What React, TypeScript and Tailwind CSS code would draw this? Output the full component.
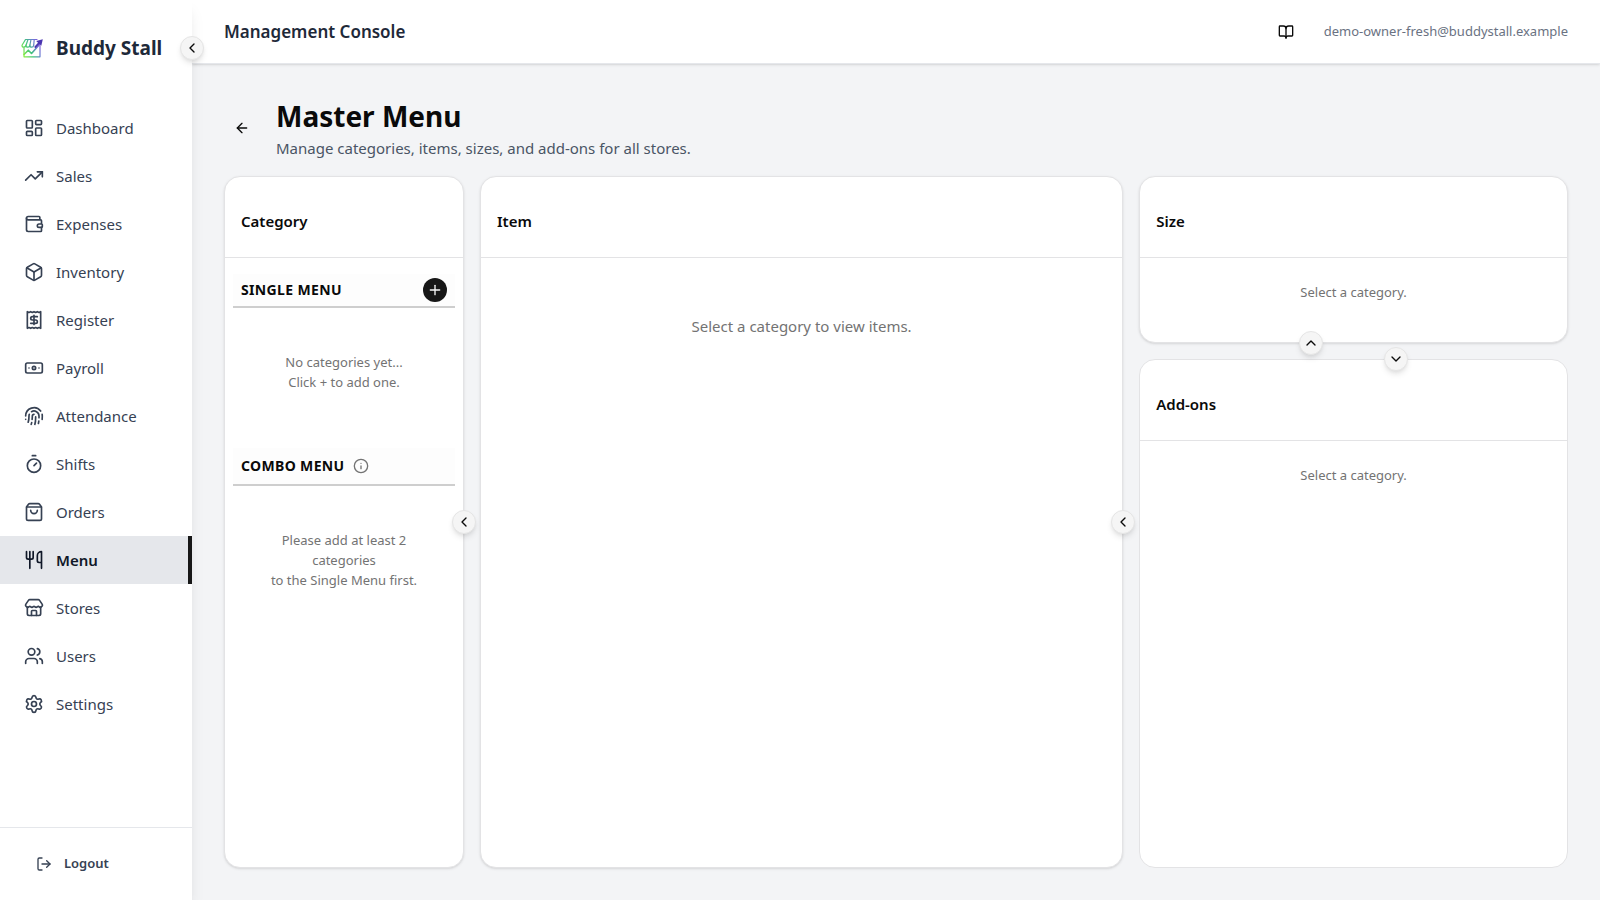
import {
  ArrowLeft,
  Banknote,
  BookOpen,
  Box,
  ChevronDown,
  ChevronLeft,
  ChevronUp,
  Fingerprint,
  Info,
  LayoutDashboard,
  LogOut,
  Plus,
  Settings,
  ShoppingBag,
  Store,
  Timer,
  TrendingUp,
  Users,
  Utensils,
  Wallet,
  type LucideIcon,
} from "lucide-react";
import type { ReactNode } from "react";

function ReceiptIcon({ className }: { className?: string }) {
  return (
    <svg
      viewBox="0 0 24 24"
      fill="none"
      stroke="currentColor"
      strokeWidth="2"
      strokeLinecap="round"
      strokeLinejoin="round"
      className={className}
      aria-hidden="true"
    >
      <path d="M4 2v20l2-1 2 1 2-1 2 1 2-1 2 1 2-1 2 1V2l-2 1-2-1-2 1-2-1-2 1-2-1-2 1Z" />
      <path d="M16 8h-6a2 2 0 1 0 0 4h4a2 2 0 1 1 0 4H8" />
      <path d="M12 17.5v-11" />
    </svg>
  );
}

type NavItem = { label: string; icon: LucideIcon | typeof ReceiptIcon; active?: boolean };

const NAV: NavItem[] = [
  { label: "Dashboard", icon: LayoutDashboard },
  { label: "Sales", icon: TrendingUp },
  { label: "Expenses", icon: Wallet },
  { label: "Inventory", icon: Box },
  { label: "Register", icon: ReceiptIcon },
  { label: "Payroll", icon: Banknote },
  { label: "Attendance", icon: Fingerprint },
  { label: "Shifts", icon: Timer },
  { label: "Orders", icon: ShoppingBag },
  { label: "Menu", icon: Utensils, active: true },
  { label: "Stores", icon: Store },
  { label: "Users", icon: Users },
  { label: "Settings", icon: Settings },
];

function Logo() {
  return (
    <svg viewBox="0 0 24 24" fill="none" className="size-6 shrink-0" aria-hidden="true">
      <defs>
        <linearGradient id="logo" x1="2" y1="18" x2="22" y2="8" gradientUnits="userSpaceOnUse">
          <stop offset="0" stopColor="#8cf03c" />
          <stop offset="0.4" stopColor="#3fc47c" />
          <stop offset="0.7" stopColor="#6a7fd0" />
          <stop offset="1" stopColor="#8a4fe0" />
        </linearGradient>
      </defs>
      <g stroke="url(#logo)" strokeWidth="1.2" strokeLinecap="round" strokeLinejoin="round">
        <path d="M17 3.5H5.500L2 9.200c0 1.300.8 2 1.800 2s2-.7 2.200-2c0 1.300.8 2 1.900 2s1.900-.7 2-2c0 1.300.8 2 1.800 2s1.900-.7 2-2" />
        <path d="M8 3.500 6 9.200M11 3.500 9.900 9.200M14.200 3.500l-.5 5.700M4 11.500v9.300h16V9.500" />
        <path d="M4 18.500l4.300-4.300 3.200 3.300 8-9" strokeWidth="1.600" />
      </g>
      <path d="M22.800 3.200 21.300 9.800 19.400 8 15.500 12.300 14.100 11 18 6.800 16.200 5Z" fill="#4a35b0" />
    </svg>
  );
}

const ROUND =
  "absolute z-20 flex size-6 items-center justify-center rounded-full border border-neutral-200 bg-neutral-100 text-neutral-950 shadow-md";

function Card({ title, className, children, toggle }: { title: string; className: string; children: ReactNode; toggle: ReactNode }) {
  return (
    <section className={`relative flex flex-col rounded-2xl border border-[#e3e3e5] bg-white ${className}`}>
      <h2 className="border-b border-[#e3e3e5] px-4 pt-8 pb-6 text-[15px] leading-6 font-semibold text-neutral-950">{title}</h2>
      {children}
      {toggle}
    </section>
  );
}

export default function App() {
  return (
    <div className="flex h-screen bg-gray-100 font-['Segoe_UI','Noto_Sans',sans-serif] text-neutral-950">
      <aside className="relative z-10 flex w-48 shrink-0 flex-col bg-white shadow-lg">
        <div className="flex h-24 items-center gap-3 pl-5">
          <Logo />
          <span className="text-[19px] leading-7 font-bold whitespace-nowrap text-gray-800">Buddy Stall</span>
        </div>
        <button type="button" aria-label="Collapse sidebar" className={`${ROUND} top-9 -right-3`}>
          <ChevronLeft className="size-4" />
        </button>
        <nav className="flex-1 pt-2">
          {NAV.map(({ label, icon: Icon, active }) => (
            <a
              key={label}
              href="#"
              aria-current={active ? "page" : undefined}
              className={`flex h-12 items-center gap-3 px-6 text-[15px] ${
                active ? "border-r-4 border-neutral-900 bg-gray-200 font-semibold text-gray-900" : "text-gray-700"
              }`}
            >
              <Icon className="size-5 shrink-0" />
              {label}
            </a>
          ))}
        </nav>
        <div className="border-t border-gray-200 p-4">
          <button type="button" className="flex h-10 w-full items-center gap-3 px-5 text-[13px] font-semibold text-gray-700">
            <LogOut className="size-4" />
            Logout
          </button>
        </div>
      </aside>

      <div className="flex min-w-0 flex-1 flex-col">
        <header className="flex h-16 shrink-0 items-center justify-between border-b border-gray-200 bg-white px-8 shadow-sm">
          <span className="text-[17px] leading-7 font-semibold text-gray-800">Management Console</span>
          <div className="flex items-center gap-5">
            <button type="button" aria-label="Guide" className="flex size-9 items-center justify-center">
              <BookOpen className="size-4" />
            </button>
            <span className="text-[13px] text-gray-500">demo-owner-fresh@buddystall.example</span>
          </div>
        </header>

        <main className="flex min-h-0 flex-1 flex-col gap-4 p-8">
          <div className="flex items-center gap-4">
            <button type="button" aria-label="Back" className="flex size-9 items-center justify-center">
              <ArrowLeft className="size-4" />
            </button>
            <div>
              <h1 className="text-[28px] leading-10 font-bold">Master Menu</h1>
              <p className="text-[15px] leading-6 text-gray-600">Manage categories, items, sizes, and add-ons for all stores.</p>
            </div>
          </div>

          <div className="grid min-h-0 flex-1 grid-cols-[240px_3fr_2fr] gap-4">
            <Card
              title="Category"
              className="shadow-sm"
              toggle={
                <button type="button" aria-label="Collapse categories" className={`${ROUND} top-1/2 -right-[13px] -translate-y-1/2`}>
                  <ChevronLeft className="size-4" />
                </button>
              }
            >
              <div className="px-2 pt-4">
                <div className="flex items-center justify-between border-b-2 border-[#cecece] bg-[#fdfdfd] px-2 py-1">
                  <h3 className="text-sm font-bold tracking-wide">SINGLE MENU</h3>
                  <button
                    type="button"
                    aria-label="Add category"
                    className="flex size-6 items-center justify-center rounded-full bg-neutral-900 text-neutral-50"
                  >
                    <Plus className="size-4" />
                  </button>
                </div>
                <p className="px-6 pt-11 pb-14 text-center text-[13px] leading-5 text-neutral-500">
                  No categories yet...
                  <br />
                  Click + to add one.
                </p>
                <div className="flex items-center gap-2 border-b-2 border-[#cecece] bg-[#fdfdfd] p-2">
                  <h3 className="text-sm font-bold tracking-wide">COMBO MENU</h3>
                  <Info className="size-4 text-neutral-500" />
                </div>
                <p className="px-6 pt-11 text-center text-[13px] leading-5 text-neutral-500">
                  Please add at least 2 categories
                  <br />
                  to the Single Menu first.
                </p>
              </div>
            </Card>

            <Card
              title="Item"
              className="shadow-sm"
              toggle={
                <button type="button" aria-label="Collapse items" className={`${ROUND} top-1/2 -right-[13px] -translate-y-1/2`}>
                  <ChevronLeft className="size-4" />
                </button>
              }
            >
              <p className="pt-14 text-center text-[15px] leading-6 text-neutral-500">Select a category to view items.</p>
            </Card>

            <div className="flex min-h-0 flex-col gap-4">
              <Card
                title="Size"
                className="shadow-sm"
                toggle={
                  <button type="button" aria-label="Collapse sizes" className={`${ROUND} -bottom-[13px] left-[40%] -translate-x-1/2`}>
                    <ChevronUp className="size-4" />
                  </button>
                }
              >
                <p className="pt-6 pb-10 text-center text-[13px] leading-5 text-neutral-500">Select a category.</p>
              </Card>
              <Card
                title="Add-ons"
                className="flex-1"
                toggle={
                  <button type="button" aria-label="Collapse add-ons" className={`${ROUND} -top-[13px] left-[60%] -translate-x-1/2`}>
                    <ChevronDown className="size-4" />
                  </button>
                }
              >
                <p className="pt-6 text-center text-[13px] leading-5 text-neutral-500">Select a category.</p>
              </Card>
            </div>
          </div>
        </main>
      </div>
    </div>
  );
}
